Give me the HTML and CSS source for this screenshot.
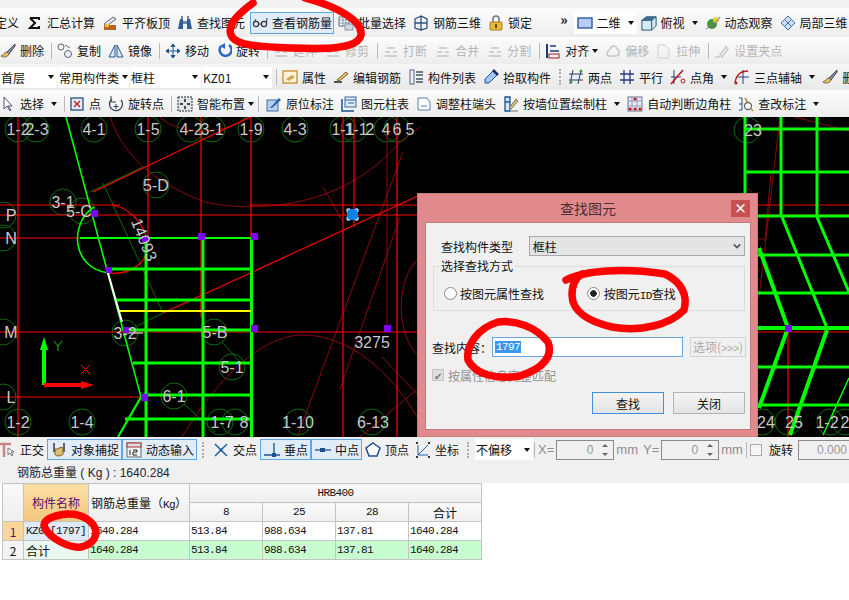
FILE: index.html
```html
<!DOCTYPE html>
<html lang="zh-CN">
  <head>
    <meta charset="UTF-8" />
    <meta name="viewport" content="width=device-width, initial-scale=1.0" />
    <title>查找图元</title>
    <link rel="stylesheet" href="styles.css">
  </head>

  <body>
    <svg class="defs" width="0" height="0">
      <symbol id="i-sum" viewBox="0 0 16 16"><path d="M3 3h9v2M3 3l5 5-5 5h9v-2" fill="none" stroke="#111" stroke-width="2"/></symbol>
      <symbol id="i-board" viewBox="0 0 16 16"><path d="M2 9l9-7 3 2-9 7z" fill="#dfe6ee" stroke="#667"/><rect x="2" y="10" width="12" height="5" fill="#b5651d"/><rect x="3" y="9" width="4" height="3" fill="#f2c230"/></symbol>
      <symbol id="i-binoc" viewBox="0 0 16 16"><path d="M1 14l2-10h3v10zM10 14V4h3l2 10z" fill="#2f5f94"/><rect x="6" y="6" width="4" height="3" fill="#789"/><rect x="4" y="1" width="2" height="3" fill="#789"/><rect x="10" y="1" width="2" height="3" fill="#789"/></symbol>
      <symbol id="i-glass" viewBox="0 0 16 16"><circle cx="4" cy="9" r="2.6" fill="none" stroke="#333" stroke-width="1.2"/><circle cx="12" cy="9" r="2.6" fill="none" stroke="#333" stroke-width="1.2"/><path d="M6.5 9h3M1.5 8L4 4M14.500 8L15 3" fill="none" stroke="#333"/></symbol>
      <symbol id="i-batch" viewBox="0 0 16 16"><path d="M1 2h10v9H1z" fill="#fff" stroke="#567"/><path d="M1 5h10M1 8h10M5 2v9M8 2v9" stroke="#89a"/><rect x="7" y="9" width="8" height="6" fill="#cfd6e6" stroke="#89a"/></symbol>
      <symbol id="i-rebar3d" viewBox="0 0 16 16"><path d="M2 4l6-3 6 3v9l-6 2-6-2zM8 1v14M2 8h12" fill="none" stroke="#2e4f80" stroke-width="1.300"/></symbol>
      <symbol id="i-lock" viewBox="0 0 16 16"><path d="M5 7V4a3 3 0 016 0v3" fill="none" stroke="#777" stroke-width="1.500"/><rect x="2" y="7" width="12" height="8" rx="1" fill="#e8b93c" stroke="#a67c16"/><rect x="7" y="9" width="2" height="4" fill="#6b4c08"/></symbol>
      <symbol id="i-plane" viewBox="0 0 16 16"><rect x="1" y="3" width="14" height="10" fill="#b9cdf3" stroke="#1c4fa0" stroke-width="1.300"/></symbol>
      <symbol id="i-cube" viewBox="0 0 18 18"><path d="M1 6l5-4h11v10l-5 5H1z" fill="#d4ebf7" stroke="#20415f"/><path d="M1 6h11v11M12 6l5-4" fill="none" stroke="#20415f"/><path d="M6 2h11l-5 4H1z" fill="#3a7096"/></symbol>
      <symbol id="i-orbit" viewBox="0 0 16 16"><circle cx="7" cy="9" r="5" fill="#3f9a3a"/><circle cx="11" cy="5" r="3" fill="#d9d23a"/><path d="M1 14C5 12 12 7 15 2" fill="none" stroke="#95a" stroke-width="1"/></symbol>
      <symbol id="i-part3d" viewBox="0 0 16 16"><path d="M1 8l7-7 7 7-7 7z" fill="#cfe0f5" stroke="#3d6ea8"/><path d="M4.500 4.500l7 7M8 1l7 7M4.500 11.500l7-7" stroke="#3d6ea8"/></symbol>
      <symbol id="i-brush" viewBox="0 0 16 16"><path d="M15 1L7 9l2 2 6-8z" fill="#8a8fb8" stroke="#445"/><path d="M7 9c-3 0-3 3-6 4 3 2 7 1 8-2z" fill="#e3c05a" stroke="#765"/></symbol>
      <symbol id="i-copy" viewBox="0 0 16 16"><circle cx="4" cy="4" r="3" fill="none" stroke="#567"/><circle cx="11" cy="11" r="3.500" fill="none" stroke="#567"/><path d="M8 2l5 3" stroke="#567"/></symbol>
      <symbol id="i-mirror" viewBox="0 0 16 16"><path d="M7 2L1 14h6zM9 2l6 12H9z" fill="#dbe8f6" stroke="#24598f"/></symbol>
      <symbol id="i-move" viewBox="0 0 16 16"><path d="M8 1v14M1 8h14M8 1L6 3.500h4zM8 15l-2-2.500h4zM1 8l2.500-2v4zM15 8l-2.500-2v4z" fill="#20598f" stroke="#20598f"/></symbol>
      <symbol id="i-rotate" viewBox="0 0 16 16"><path d="M5 3a6 6 0 108-1" fill="none" stroke="#2a68c0" stroke-width="2.500"/><path d="M9 0v6L4 3z" fill="#2a68c0"/></symbol>
      <symbol id="i-grey" viewBox="0 0 16 16"><path d="M2 13h12M2 9h5M10 9h4M4 5h8" stroke="#c5c5c5" stroke-width="1.500" fill="none"/></symbol>
      <symbol id="i-align" viewBox="0 0 16 16"><path d="M2 1v14" stroke="#1a3d7a" stroke-width="2"/><path d="M5 3h6M5 8h9" stroke="#1a3d7a" stroke-width="1.500"/><rect x="4" y="11" width="10" height="4" fill="none" stroke="#a01c1c"/></symbol>
      <symbol id="i-offset" viewBox="0 0 16 16"><path d="M3 13c-3-4 1-5 2-7 2-4 6-4 7 0 3 1 3 7-1 7z" fill="none" stroke="#c8c8c8" stroke-width="1.500"/></symbol>
      <symbol id="i-stretch" viewBox="0 0 16 16"><path d="M2 2h7l4 5v8H2z" fill="none" stroke="#cfcfcf"/></symbol>
      <symbol id="i-grip" viewBox="0 0 16 16"><path d="M1 14h5M8 14l6-8-2-2-6 8z" fill="none" stroke="#cacaca" stroke-width="1.500"/></symbol>
      <symbol id="i-attr" viewBox="0 0 16 16"><rect x="1" y="2" width="14" height="12" fill="#fff3d6" stroke="#c68a2a" stroke-width="1.300"/><path d="M4 10l6-4 3 2-6 4z" fill="#caa45a"/></symbol>
      <symbol id="i-pen" viewBox="0 0 16 16"><path d="M1 13h8" stroke="#222" stroke-width="1.500"/><path d="M4 11l9-8 2 2-9 7z" fill="#e9c66a" stroke="#7a5c1e"/></symbol>
      <symbol id="i-list" viewBox="0 0 16 16"><rect x="2" y="1" width="4" height="14" fill="none" stroke="#568"/><path d="M8 3h7M8 6h7M8 10h7M8 13h7" stroke="#456" stroke-width="1.300"/></symbol>
      <symbol id="i-dropper" viewBox="0 0 16 16"><path d="M10 2l4 4-8 8H2v-4z" fill="#9fc6ef" stroke="#1d4f91"/><path d="M10 1l5 5" stroke="#1d2f60" stroke-width="2.500"/></symbol>
      <symbol id="i-twopt" viewBox="0 0 16 16"><path d="M5 1L2 15M13 1l-3 14M1 5h14M1 11h14" stroke="#24406e" fill="none"/><circle cx="13" cy="2" r="1.500" fill="#3c9a30"/><circle cx="3" cy="13" r="1.500" fill="#3c9a30"/></symbol>
      <symbol id="i-parallel" viewBox="0 0 16 16"><path d="M1 5h14M1 11h14M5 1v14M11 1v14" stroke="#2a3b80" stroke-width="1.300"/></symbol>
      <symbol id="i-ptangle" viewBox="0 0 16 16"><path d="M4 1v14M1 8h10M1 15L13 1" stroke="#2a3b80" fill="none"/><path d="M1 15L13 1" stroke="#c01818" stroke-width="1.500"/><circle cx="13" cy="12" r="2" fill="none" stroke="#c01818"/></symbol>
      <symbol id="i-arc" viewBox="0 0 16 16"><path d="M1 14C2 6 7 2 14 2" fill="none" stroke="#c01818" stroke-width="1.300"/><path d="M9 1v14M4 8h11" stroke="#2a3b80"/><circle cx="2" cy="14" r="1.500" fill="#c01818"/></symbol>
      <symbol id="i-arrow" viewBox="0 0 16 16"><path d="M4 1v12l3-3 3 5 1-1-3-4h4z" fill="#fff" stroke="#557"/></symbol>
      <symbol id="i-xbox" viewBox="0 0 16 16"><rect x="2" y="2" width="12" height="12" fill="#e6eef8" stroke="#2a4f80" stroke-width="1.300"/><path d="M5 5l6 6M11 5l-6 6" stroke="#c01818" stroke-width="1.300"/></symbol>
      <symbol id="i-turn" viewBox="0 0 16 16"><path d="M4 3a6.500 6.500 0 109 1" fill="none" stroke="#345" stroke-width="1.300"/><path d="M8 8v5M5.500 10.500h5" stroke="#345"/><path d="M3 0v6h5" fill="none" stroke="#345"/></symbol>
      <symbol id="i-smart" viewBox="0 0 16 16"><rect x="1" y="1" width="14" height="14" fill="#dfe4ea" stroke="#222" stroke-dasharray="2 1"/><path d="M8 3v3M8 10v3M3 8h3M10 8h3" stroke="#111" stroke-width="1.500"/></symbol>
      <symbol id="i-mark" viewBox="0 0 16 16"><rect x="1" y="4" width="11" height="11" fill="#b8d0ec" stroke="#3a6ea8"/><path d="M4 12l9-10 2 2-9 8z" fill="#2a65a8"/></symbol>
      <symbol id="i-table" viewBox="0 0 16 16"><rect x="4" y="1" width="11" height="10" fill="#dfeaf8" stroke="#3a66a0"/><path d="M4 4h11M7 7h6" stroke="#3a66a0"/><path d="M1 3v12h12" fill="none" stroke="#1d4f91" stroke-width="1.500"/></symbol>
      <symbol id="i-adjust" viewBox="0 0 16 16"><path d="M2 2h9l3 4v8H2z" fill="#fff" stroke="#5a7fb0"/><path d="M5 10h6" stroke="#5a7fb0"/></symbol>
      <symbol id="i-wall" viewBox="0 0 16 16"><path d="M2 1h5v14H2zM2 6h5" fill="#d8e6f6" stroke="#1d4f91" stroke-width="1.300"/><path d="M6 12l7-9 2 2-7 8zM8 15h7" fill="#e1c26c" stroke="#776"/></symbol>
      <symbol id="i-auto" viewBox="0 0 16 16"><rect x="1" y="1" width="14" height="14" fill="#e3ecf7" stroke="#678"/><path d="M5 1v14M10 1v14M1 5h14M1 10h14" stroke="#99b"/><circle cx="3" cy="13" r="1.500" fill="#d01010"/><circle cx="8" cy="13" r="1.500" fill="#d01010"/><circle cx="13" cy="13" r="1.500" fill="#d01010"/><circle cx="8" cy="3" r="1.500" fill="#d01010"/></symbol>
      <symbol id="i-check" viewBox="0 0 16 16"><path d="M1 2h3M1 8h3M1 14h3M4 2v12" stroke="#1d4f91" fill="none"/><circle cx="10" cy="10" r="3.500" fill="#fff" stroke="#666" stroke-width="1.300"/><path d="M13 13l2 2M7 2l3 5" stroke="#b38a2a" stroke-width="1.500"/></symbol>
      <symbol id="i-ortho" viewBox="0 0 16 16"><path d="M0 2h11M4 2v13" stroke="#c98484" stroke-width="2.500"/><path d="M8 6v7l2-2 2 3 1-1-2-3h3z" fill="#fff" stroke="#777"/></symbol>
      <symbol id="i-snap" viewBox="0 0 16 16"><path d="M3 1v9M13 1v9" stroke="#433" stroke-width="1.500"/><path d="M4 7c3 1 5-3 8-1v6c0 2-8 3-8 0z" fill="#d9bd70" stroke="#7a5c1e"/></symbol>
      <symbol id="i-dyn" viewBox="0 0 16 16"><rect x="1" y="1" width="14" height="14" fill="#f4f4f4" stroke="#667"/><rect x="1" y="1" width="14" height="4" fill="#ddd" stroke="#a33"/><path d="M4 8v5M7 8h4v2H7v3h4" fill="none" stroke="#222"/></symbol>
      <symbol id="i-cross" viewBox="0 0 16 16"><path d="M2 2l12 12M14 2L2 14" stroke="#1f5fa8" stroke-width="1.500"/><circle cx="8" cy="8" r="1.500" fill="#1f5fa8"/></symbol>
      <symbol id="i-perp" viewBox="0 0 16 16"><path d="M0 13h16M10 1v13" stroke="#1f4f90" stroke-width="1.300"/><rect x="8" y="11" width="4" height="4" fill="#1f4f90"/></symbol>
      <symbol id="i-mid" viewBox="0 0 16 16"><path d="M0 8h16" stroke="#1f4f90" stroke-width="1.300"/><rect x="5" y="6" width="5" height="4" fill="#1f4f90"/></symbol>
      <symbol id="i-vertex" viewBox="0 0 16 16"><path d="M8 1l7 5-3 8H4L1 6z" fill="#fff" stroke="#1f4f90" stroke-width="1.500"/></symbol>
      <symbol id="i-coord" viewBox="0 0 16 16"><path d="M3 13L13 3M3 3v10h10" fill="none" stroke="#1f5fa8"/><path d="M1 1h2M13 1h2M1 15h2M13 15h2" stroke="#333" stroke-width="2"/></symbol>
    </svg>

    <div class="bar bar-cut"></div>

    <div class="bar bar-one">
      <span class="tool cut-left">定义</span>
      <span class="tool"><svg class="ic"><use href="#i-sum"/></svg>汇总计算</span>
      <span class="tool"><svg class="ic"><use href="#i-board"/></svg>平齐板顶</span>
      <span class="tool"><svg class="ic"><use href="#i-binoc"/></svg>查找图元</span>
      <span class="tool on wide"><svg class="ic"><use href="#i-glass"/></svg>查看钢筋量</span>
      <span class="tool"><svg class="ic"><use href="#i-batch"/></svg>批量选择</span>
      <span class="tool"><svg class="ic"><use href="#i-rebar3d"/></svg>钢筋三维</span>
      <span class="tool"><svg class="ic"><use href="#i-lock"/></svg>锁定</span>
      <span class="more">»</span>
      <span class="tool view"><svg class="ic"><use href="#i-plane"/></svg>二维<i class="caret"></i></span>
      <span class="tool"><svg class="ic"><use href="#i-cube"/></svg>俯视<i class="caret"></i></span>
      <span class="tool"><svg class="ic"><use href="#i-orbit"/></svg>动态观察</span>
      <span class="tool"><svg class="ic"><use href="#i-part3d"/></svg>局部三维</span>
    </div>

    <div class="bar bar-two">
      <span class="tool first"><svg class="ic"><use href="#i-brush"/></svg>删除</span><b class="sep"></b>
      <span class="tool"><svg class="ic"><use href="#i-copy"/></svg>复制</span>
      <span class="tool"><svg class="ic"><use href="#i-mirror"/></svg>镜像</span><b class="sep"></b>
      <span class="tool"><svg class="ic"><use href="#i-move"/></svg>移动</span>
      <span class="tool"><svg class="ic"><use href="#i-rotate"/></svg>旋转</span><b class="sep"></b>
      <span class="tool off long"><svg class="ic"><use href="#i-grey"/></svg>延伸</span>
      <span class="tool off long"><svg class="ic"><use href="#i-grey"/></svg>修剪</span><b class="sep"></b>
      <span class="tool off long"><svg class="ic"><use href="#i-grey"/></svg>打断</span>
      <span class="tool off long"><svg class="ic"><use href="#i-grey"/></svg>合并</span>
      <span class="tool off long"><svg class="ic"><use href="#i-grey"/></svg>分割</span><b class="sep"></b>
      <span class="tool tight"><svg class="ic"><use href="#i-align"/></svg>对齐<i class="caret"></i></span>
      <span class="tool off"><svg class="ic"><use href="#i-offset"/></svg>偏移</span>
      <span class="tool off long"><svg class="ic"><use href="#i-stretch"/></svg>拉伸</span><b class="sep"></b>
      <span class="tool off"><svg class="ic"><use href="#i-grip"/></svg>设置夹点</span>
    </div>

    <div class="bar bar-three">
      <span class="combo c1">首层<i class="caret"></i></span>
      <span class="combo c2">常用构件类<i class="caret"></i></span>
      <span class="combo c3">框柱<i class="caret"></i></span>
      <span class="combo c4">KZ01<i class="caret"></i></span><b class="sep"></b>
      <span class="tool"><svg class="ic"><use href="#i-attr"/></svg>属性</span>
      <span class="tool"><svg class="ic"><use href="#i-pen"/></svg>编辑钢筋</span>
      <span class="tool"><svg class="ic"><use href="#i-list"/></svg>构件列表</span>
      <span class="tool"><svg class="ic"><use href="#i-dropper"/></svg>拾取构件</span>
      <b class="grip"></b>
      <span class="tool"><svg class="ic"><use href="#i-twopt"/></svg>两点</span>
      <span class="tool"><svg class="ic"><use href="#i-parallel"/></svg>平行</span>
      <span class="tool"><svg class="ic"><use href="#i-ptangle"/></svg>点角<i class="caret"></i></span>
      <span class="tool"><svg class="ic"><use href="#i-arc"/></svg>三点辅轴<i class="caret"></i></span>
      <span class="tool"><svg class="ic"><use href="#i-brush"/></svg>删除</span>
    </div>

    <div class="bar bar-four">
      <span class="tool first"><svg class="ic"><use href="#i-arrow"/></svg>选择<i class="caret"></i></span><b class="sep"></b>
      <span class="tool nudge-l"><svg class="ic"><use href="#i-xbox"/></svg>点</span>
      <span class="tool"><svg class="ic"><use href="#i-turn"/></svg>旋转点</span><b class="sep"></b>
      <span class="tool tight"><svg class="ic"><use href="#i-smart"/></svg>智能布置<i class="caret"></i></span><b class="sep"></b>
      <span class="tool nudge-r"><svg class="ic"><use href="#i-mark"/></svg>原位标注</span>
      <span class="tool"><svg class="ic"><use href="#i-table"/></svg>图元柱表</span>
      <span class="tool"><svg class="ic"><use href="#i-adjust"/></svg>调整柱端头</span>
      <span class="tool"><svg class="ic"><use href="#i-wall"/></svg>按墙位置绘制柱<i class="caret"></i></span>
      <span class="tool"><svg class="ic"><use href="#i-auto"/></svg>自动判断边角柱</span>
      <span class="tool"><svg class="ic"><use href="#i-check"/></svg>查改标注<i class="caret"></i></span>
    </div>

    <div class="canvas">
      <svg class="cad" viewBox="0 0 849 320" width="849" height="320">
        <g fill="none" stroke="#0b6b0b" stroke-width="1">
          <circle cx="18" cy="12" r="13"/><circle cx="36" cy="12" r="13"/><circle cx="94" cy="12" r="13"/><circle cx="148" cy="12" r="13"/>
          <circle cx="190" cy="12" r="13"/><circle cx="212" cy="12" r="13"/><circle cx="251" cy="12" r="13"/><circle cx="295" cy="12" r="13"/>
          <circle cx="343" cy="12" r="13"/><circle cx="354" cy="12" r="13"/><circle cx="387" cy="12" r="13"/><circle cx="397" cy="12" r="13"/>
          <circle cx="156" cy="68" r="13"/><circle cx="63" cy="85" r="13"/><circle cx="82" cy="94" r="13"/>
          <circle cx="3" cy="98" r="13"/><circle cx="3" cy="121" r="13"/><circle cx="3" cy="215" r="13"/><circle cx="3" cy="280" r="13"/>
          <circle cx="125" cy="216" r="13"/><circle cx="214" cy="215" r="13"/><circle cx="232" cy="250" r="13"/><circle cx="174" cy="279" r="13"/>
          <circle cx="18" cy="305" r="13"/><circle cx="82" cy="305" r="13"/><circle cx="220" cy="305" r="13"/><circle cx="235" cy="305" r="13"/>
          <circle cx="298" cy="305" r="13"/><circle cx="372" cy="305" r="13"/>
          <circle cx="747" cy="13" r="13"/><circle cx="762" cy="305" r="13"/><circle cx="788" cy="305" r="13"/><circle cx="830" cy="305" r="13"/><circle cx="845" cy="305" r="13"/>
          <path d="M90 75L143 50M103 66L163 196M133 211L163 196M222 225L240 245M184 287L215 315"/>
        </g>
        <g fill="none" stroke="#8a0a0a" stroke-width="1">
          <path d="M110 0C125 45 165 70 205 85C250 95 340 95 400 25L420 10"/>
          <path d="M182 320C215 265 260 218 303 218C345 218 390 250 420 305"/>
          <path d="M160 0C175 15 215 22 250 0M420 140C395 160 395 220 420 240"/>
          <path d="M298 318L403 35M340 272L400 100M323 70L343 105M780 0L759 181M745 55L771 55L765 125M743 122L765 122M745 70L752 75"/>
          <path d="M387 10V211M382 240L420 280M360 320L420 270M795 0L849 14"/>
        </g>

        <g stroke="#f00" stroke-width="1.200" fill="none">
          <path d="M18 0V320M148 0V122M201 0V200M251 0V320M343 0V320M354 0V110M397 0V320M788 213V320"/>
          <path d="M0 88H120M250 88H849M0 98H849M0 121H146M0 215H849M0 280H143"/>
          <path d="M93 75L250 0M163 196L420 78"/>
          <path d="M112 88C135 92 150 115 147 135C143 150 125 158 108 156"/>
        </g>

        <g fill="none" stroke="#0f0">
          <path d="M66 0L141 280" stroke-width="1.600"/>
          <path d="M141 280L118 320" stroke-width="2.200"/>
          <path d="M94 90C70 105 70 150 108 156" stroke-width="1.600"/>
          <path d="M146 121V320M203 121V320M251.500 121V320" stroke-width="3"/>
          <path d="M80 121H251" stroke-width="2"/>
          <path d="M108 152H251M116 183H251M125 213H251M133 246H251M143 278H251M125 302H251" stroke-width="3"/>
          <path d="M745 0V76M745 12H849M745 55H849M758 99H849M758 138H849M758 176H849M758 250H849M758 288H849M781 0V99M817 0V99" stroke-width="3"/>
          <path d="M758 211H849" stroke-width="4"/>
          <path d="M782 100L827 211M817 100L849 175" stroke-width="3"/>
          <path d="M759 131L788 211L759 291M827 213L790 318" stroke-width="4"/>
          <path d="M849 261L823 318" stroke-width="1.500"/>
        </g>
        <path d="M119 194H251" stroke="#ff0" stroke-width="2"/>
        <path d="M108 156L122 205" stroke="#fff" stroke-width="2"/>
        <path d="M125 216H143" stroke="#fff" stroke-width="1"/>

        <g fill="#7f00ff">
          <rect x="91" y="93" width="7" height="7"/><rect x="142" y="119" width="7" height="6"/><rect x="198" y="116" width="7" height="7"/>
          <rect x="251" y="116" width="7" height="7"/><rect x="106" y="150" width="6" height="6"/><rect x="123" y="210" width="6" height="6"/>
          <rect x="251" y="208" width="7" height="7"/><rect x="384" y="208" width="7" height="7"/><rect x="141" y="277" width="7" height="7"/>
          <rect x="785" y="208" width="7" height="7"/>
        </g>
        <rect x="347" y="92" width="11" height="11" fill="#0a84e8"/>
        <path d="M347 95V92H350M355 92H358V95M347 100V103H350M355 103H358V100" fill="none" stroke="#fff"/>

        <path d="M44 268V232" stroke="#0f0" stroke-width="4"/><path d="M44 220l-4 13h8z" fill="#0f0"/>
        <path d="M44 268H82" stroke="#f00" stroke-width="4"/><path d="M94 268l-13-4v8z" fill="#f00"/>
        <path d="M54 224l4 5 4-5M58 229v5" fill="none" stroke="#0c0"/>
        <path d="M81 248l9 9M90 248l-9 9" stroke="#e00"/>

        <g class="axis" text-anchor="middle">
          <text x="18" y="18">1-2</text><text x="37" y="18">2-3</text><text x="94" y="18">4-1</text><text x="148" y="18">1-5</text>
          <text x="191" y="18">4-2</text><text x="212" y="18">3-1</text><text x="251" y="18">1-9</text><text x="295" y="18">4-3</text>
          <text x="343" y="18">1-1</text><text x="356" y="18">1-1</text><text x="370" y="18">2</text><text x="386" y="18">4</text><text x="397" y="18">6</text><text x="410" y="18">5</text>
          <text x="156" y="74">5-D</text><text x="63" y="91">3-1</text><text x="79" y="100">5-C</text>
          <text x="11" y="104">P</text><text x="11" y="127">N</text><text x="11" y="221">M</text><text x="11" y="286">L</text>
          <text x="125" y="222">3-2</text><text x="215" y="221">5-B</text><text x="232" y="256">5-1</text><text x="174" y="285">6-1</text>
          <text x="18" y="311">1-2</text><text x="82" y="311">1-4</text><text x="222" y="311">1-7</text><text x="244" y="311">8</text>
          <text x="298" y="311">1-10</text><text x="373" y="311">6-13</text><text x="372" y="231">3275</text>
          <text x="753" y="19">23</text><text x="766" y="311">24</text><text x="794" y="311">25</text><text x="827" y="311">1-2</text><text x="845" y="311">2</text>
          <text transform="translate(139 125) rotate(68)">14093</text>
        </g>
      </svg>

      <div class="dialog">
        <div class="dlg-title">查找图元<span class="dlg-close">×</span></div>
        <div class="dlg-body">
          <div class="dlg-row">
            <label class="dlg-label">查找构件类型</label>
            <div class="dlg-select">框柱<svg class="chev" viewBox="0 0 10 6"><path d="M1 1l4 4 4-4" fill="none" stroke="#555" stroke-width="2"/></svg></div>
          </div>
          <fieldset class="dlg-group">
            <legend>选择查找方式</legend>
            <span class="radio-item"><i class="radio"></i><span>按图元属性查找</span></span>
            <span class="radio-item second"><i class="radio sel"></i><span>按图元<span class="mono">ID</span>查找</span></span>
          </fieldset>
          <div class="dlg-row find">
            <label>查找内容：</label>
            <div class="dlg-input"><span class="picked">1797</span></div>
            <span class="dlg-opt">选项(<span class="mono">&gt;&gt;&gt;</span>)</span>
          </div>
          <div class="dlg-check"><i class="tick">✔</i>按属性信息完整匹配</div>
          <div class="dlg-btns">
            <button class="btn def">查找</button>
            <button class="btn">关闭</button>
          </div>
        </div>
      </div>
    </div>

    <div class="bar bar-status">
      <span class="tool first"><svg class="ic"><use href="#i-ortho"/></svg>正交</span>
      <span class="tool on snapbtn"><svg class="ic"><use href="#i-snap"/></svg>对象捕捉</span>
      <span class="tool on snapbtn"><svg class="ic"><use href="#i-dyn"/></svg>动态输入</span>
      <b class="grip"></b>
      <span class="tool"><svg class="ic"><use href="#i-cross"/></svg>交点</span>
      <span class="tool on ptbtn"><svg class="ic"><use href="#i-perp"/></svg>垂点</span>
      <span class="tool on ptbtn"><svg class="ic"><use href="#i-mid"/></svg>中点</span>
      <span class="tool"><svg class="ic"><use href="#i-vertex"/></svg>顶点</span>
      <span class="tool"><svg class="ic"><use href="#i-coord"/></svg>坐标</span>
      <b class="grip"></b>
      <span class="combo c5">不偏移<i class="caret"></i></span><b class="sep"></b>
      <span class="xy">X=</span><span class="spin">0<i class="updown"></i></span><span class="xy">mm</span>
      <span class="xy ygap">Y=</span><span class="spin">0<i class="updown"></i></span><span class="xy">mm</span><b class="sep"></b>
      <i class="box"></i><span class="rot">旋转</span><span class="angle">0.000</span>
    </div>

    <div class="total">钢筋总重量 ( Kg ) : 1640.284</div>

    <table class="grid">
      <colgroup>
        <col class="c-no"><col class="c-name"><col class="c-weight"><col class="c-num"><col class="c-num"><col class="c-num"><col class="c-num">
      </colgroup>
      <thead>
        <tr>
          <th rowspan="2"></th>
          <th rowspan="2" class="hl">构件名称</th>
          <th rowspan="2">钢筋总重量（<span class="mono">Kg</span>）</th>
          <th colspan="4" class="mono">HRB400</th>
        </tr>
        <tr>
          <th class="mono">8</th>
          <th class="mono">25</th>
          <th class="mono">28</th>
          <th>合计</th>
        </tr>
      </thead>
      <tbody>
        <tr>
          <td class="no hl-no">1</td>
          <td class="name pick mono">KZ01[1797]</td>
          <td class="mono">1640.284</td>
          <td class="mono">513.84</td>
          <td class="mono">988.634</td>
          <td class="mono">137.81</td>
          <td class="mono">1640.284</td>
        </tr>
        <tr class="sum">
          <td class="no">2</td>
          <td class="name">合计</td>
          <td class="mono">1640.284</td>
          <td class="mono">513.84</td>
          <td class="mono">988.634</td>
          <td class="mono">137.81</td>
          <td class="mono">1640.284</td>
        </tr>
      </tbody>
    </table>

    <!-- 红色手绘圈 -->
    <svg class="marks" viewBox="0 0 849 600" width="849" height="600">
      <g fill="none" stroke="#f00" stroke-width="7.500" stroke-linecap="round" stroke-linejoin="round">
        <path d="M253 3C238 14 227 25 231 35C235 46 262 47 292 48C322 49 358 50 361 35C363 20 335 6 305 -2"/>
        <path d="M566 280C585 270 625 268 665 274C682 282 688 296 684 310C670 325 640 332 612 327C590 322 572 312 572 295C572 285 575 278 582 274"/>
        <path d="M498 322C515 320 535 326 548 342C553 355 545 368 520 376C495 380 475 374 468 360C466 345 478 328 498 322Z"/>
        <path d="M67 514C82 513 95 522 96 532C96 542 85 548 76 547C62 545 46 535 44 525C45 518 57 515 67 514Z"/>
      </g>
    </svg>
  </body>
</html>
```

FILE: styles.css
```css
* {
  margin: 0;
  padding: 0;
  box-sizing: border-box;
}

body {
  position: relative;
  width: 849px;
  height: 600px;
  overflow: hidden;
  background: #fff;
  font-family: "Noto Sans CJK SC", "Liberation Sans", sans-serif;
  font-size: 12px;
  color: #111;
}

.defs {
  position: absolute;
}

.mono {
  font-family: "Liberation Mono", "Noto Sans CJK SC", monospace;
  font-size: 11px;
  letter-spacing: -0.6px;
}

/* 工具栏 */
.bar {
  display: flex;
  align-items: center;
  white-space: nowrap;
  overflow: hidden;
  background: linear-gradient(#fcfcfc, #ededed);
}
.bar-cut {
  height: 8px;
  background: #f2f2f2;
}
.bar-one {
  height: 29px;
}
.bar-two {
  height: 27px;
}
.bar-three {
  height: 26px;
  background: linear-gradient(#f6f6f6, #e9e9e9);
}
.bar-four {
  height: 27px;
}

.tool {
  display: inline-flex;
  align-items: center;
  gap: 4px;
  height: 22px;
  padding: 0 3px;
  margin-right: 1px;
  flex: none;
}
.ic {
  width: 16px;
  height: 16px;
  flex: none;
}
.tool.on {
  background: #e0ecf9;
  border: 1px solid #5ea6ea;
}
.tool.off {
  color: #b5b5b5;
}
.first {
  margin-left: -3px;
}
.cut-left {
  margin-left: -8px;
  margin-right: 2px;
}
.wide {
  margin: 0 1px;
  padding: 0 1px;
}
.long {
  padding-right: 4px;
}
.tight {
  padding-right: 0;
}
.tight .caret {
  margin-left: -1px;
}
.bar-two .tight {
  margin-right: 4px;
}
.nudge-l {
  margin-left: -1px;
}
.nudge-r {
  margin-left: 2px;
}
.more {
  margin: 0 6px 8px 24px;
  font-size: 14px;
  font-weight: 700;
}
.view {
  background: #fff;
}
.caret {
  display: inline-block;
  margin-left: 3px;
  border-top: 4px solid #111;
  border-left: 3px solid transparent;
  border-right: 3px solid transparent;
}
.sep {
  width: 1px;
  height: 16px;
  margin: 0 2px 0 3px;
  background: #b9b9b9;
  flex: none;
}
.grip {
  width: 3px;
  height: 16px;
  margin: 0 5px;
  flex: none;
  border-left: 2px dotted #aaa;
}
.bar-three .grip {
  margin: 0 3px 0 4px;
}

.combo {
  display: inline-flex;
  align-items: center;
  justify-content: space-between;
  height: 21px;
  padding: 0 3px 0 1px;
  margin-right: 1px;
  background: #fff;
  flex: none;
}
.c1 { width: 57px; }
.c2 { width: 71px; }
.c3 { width: 71px; }
.c4 { width: 70px; }
.c5 { width: 58px; }

/* 绘图区 */
.canvas {
  position: relative;
  height: 320px;
  background: #000;
  overflow: hidden;
}
.cad {
  display: block;
}
.axis text {
  font-family: "Liberation Sans", sans-serif;
  font-size: 16px;
  fill: #c9c9c9;
}

/* 对话框 */
.dialog {
  position: absolute;
  left: 417px;
  top: 76px;
  width: 341px;
  height: 244px;
  padding: 0 6px 7px 7px;
  background: #e08a8d;
  border: 1px solid #c87c7e;
}
.dlg-title {
  position: relative;
  height: 28px;
  line-height: 28px;
  text-align: center;
  font-size: 14px;
  color: #4a2f30;
}
.dlg-close {
  position: absolute;
  right: 1px;
  top: 6px;
  width: 19px;
  height: 17px;
  line-height: 16px;
  font-size: 13px;
  font-weight: 700;
  color: #fff;
  background: #c75050;
}
.dlg-body {
  height: 208px;
  padding: 13px 5px 0 7px;
  background: #f0f0f0;
  border: 1px solid #c0787a;
}
.dlg-row {
  display: flex;
  align-items: center;
}
.dlg-label {
  width: 96px;
  padding-left: 8px;
}
.dlg-select {
  display: flex;
  align-items: center;
  justify-content: space-between;
  width: 217px;
  height: 20px;
  padding: 0 3px 0 3px;
  background: #e4e4e4;
  border: 1px solid #a9a9a9;
}
.chev {
  width: 8px;
  height: 6px;
}
.dlg-group {
  display: block;
  position: relative;
  height: 52px;
  margin-top: 3px;
  border: 1px solid #dcdcdc;
  padding: 12px 0 0 10px;
}
.dlg-group legend {
  margin-left: -3px;
  padding-right: 2px;
  line-height: 14px;
  background: #f0f0f0;
}
.radio-item {
  display: inline-flex;
  align-items: center;
  gap: 3px;
}
.radio-item.second {
  gap: 4px;
  margin-left: 40px;
}
.radio {
  width: 13px;
  height: 13px;
  border: 1px solid #8a8a8a;
  border-radius: 50%;
  background: #fff;
}
.radio.sel {
  background: radial-gradient(circle, #222 0 3px, #fff 3.5px);
}
.find {
  margin-top: 26px;
  margin-left: -1px;
}
.find label {
  flex: none;
  width: 60px;
  white-space: nowrap;
}
.dlg-input {
  display: flex;
  align-items: center;
  flex: none;
  width: 191px;
  height: 20px;
  padding-left: 2px;
  background: #fff;
  border: 1px solid #6aa7e0;
}
.picked {
  color: #fff;
  background: #3b96f0;
  font-family: "Liberation Mono", monospace;
  font-size: 11px;
  letter-spacing: -0.6px;
  padding: 0 1px;
}
.dlg-opt {
  flex: none;
  width: 56px;
  height: 20px;
  margin-left: 7px;
  line-height: 18px;
  text-align: center;
  color: #aaa;
  border: 1px solid #d2d2d2;
}
.dlg-check {
  display: flex;
  align-items: center;
  gap: 4px;
  height: 14px;
  margin-top: 11px;
  margin-left: -1px;
  color: #909090;
}
.tick {
  width: 12px;
  height: 12px;
  line-height: 11px;
  font-style: normal;
  font-size: 10px;
  text-align: center;
  color: #777;
  background: #dedede;
  border: 1px solid #c4c4c4;
}
.dlg-btns {
  display: flex;
  justify-content: flex-end;
  gap: 9px;
  margin-top: 10px;
}
.btn {
  width: 72px;
  height: 22px;
  font: inherit;
  color: #111;
  background: linear-gradient(#f3f3f3, #e4e4e4);
  border: 1px solid #b4b4b4;
}
.btn.def {
  border-color: #3d8fe0;
}

/* 状态栏 */
.bar-status {
  height: 25px;
  background: #f0f0f0;
}
.bar-status .tool {
  margin-right: 0;
  height: 21px;
}
.bar-status .sep {
  margin: 0 1px;
}
.bar-status .combo {
  margin-right: 0;
}
.snapbtn {
  width: 75px;
}
.ptbtn {
  width: 51px;
}
.xy {
  color: #8d8d8d;
  font-size: 13px;
  margin: 0 2px;
  font-family: "Liberation Sans", sans-serif;
}
.ygap {
  margin-left: 3px;
}
.spin {
  position: relative;
  width: 58px;
  height: 20px;
  padding-right: 20px;
  line-height: 18px;
  text-align: right;
  color: #999;
  font-family: "Liberation Sans", sans-serif;
  border: 1px solid #8a8a8a;
  flex: none;
}
.updown {
  position: absolute;
  right: 4px;
  top: 3px;
  width: 7px;
  height: 12px;
}
.updown::before,
.updown::after {
  content: "";
  position: absolute;
  left: 0;
  border-left: 3px solid transparent;
  border-right: 3px solid transparent;
}
.updown::before {
  top: 0;
  border-bottom: 3px solid #666;
}
.updown::after {
  bottom: 0;
  border-top: 3px solid #666;
}
.box {
  width: 12px;
  height: 12px;
  margin-left: 2px;
  border: 1px solid #aaa;
  background: #f5f5f5;
  flex: none;
}
.rot {
  margin-left: 7px;
  margin-right: 5px;
}
.angle {
  width: 60px;
  height: 20px;
  padding-left: 18px;
  line-height: 18px;
  color: #999;
  font-family: "Liberation Sans", sans-serif;
  border: 1px solid #8a8a8a;
  flex: none;
}

/* 钢筋表 */
.total {
  height: 21px;
  padding-left: 17px;
  line-height: 22px;
  background: #f0f0f0;
  color: #223;
  font-family: "Liberation Sans", "Noto Sans CJK SC", sans-serif;
}
.grid {
  margin-left: 2px;
  width: 480px;
  border-collapse: collapse;
  table-layout: fixed;
  background: #fff;
}
.c-no { width: 21px; }
.c-name { width: 65px; }
.c-weight { width: 101px; }
.c-num { width: 73px; }
.grid th,
.grid td {
  border: 1px solid #c4c4c4;
  height: 19px;
  font-weight: 400;
  padding: 0 1px;
  white-space: nowrap;
  overflow: hidden;
}
.grid th {
  background: linear-gradient(#fafafa, #eeeeee);
  text-align: center;
}
.grid th.hl {
  background: linear-gradient(#fde0a8, #f3c67c);
  color: #5a0f78;
}
.grid .no {
  text-align: center;
  background: #f4f4f4;
}
.grid .hl-no {
  background: #fbd698;
  color: #5a0f78;
}
.grid .name {
  padding-left: 2px;
}
.grid .pick {
  background: #dfeaf8;
}
.sum td {
  background: #c8fdd0;
}
.sum .name {
  background: #eaf7ee;
}

/* 手绘圈 */
.marks {
  position: absolute;
  left: 0;
  top: 0;
  pointer-events: none;
}
```
